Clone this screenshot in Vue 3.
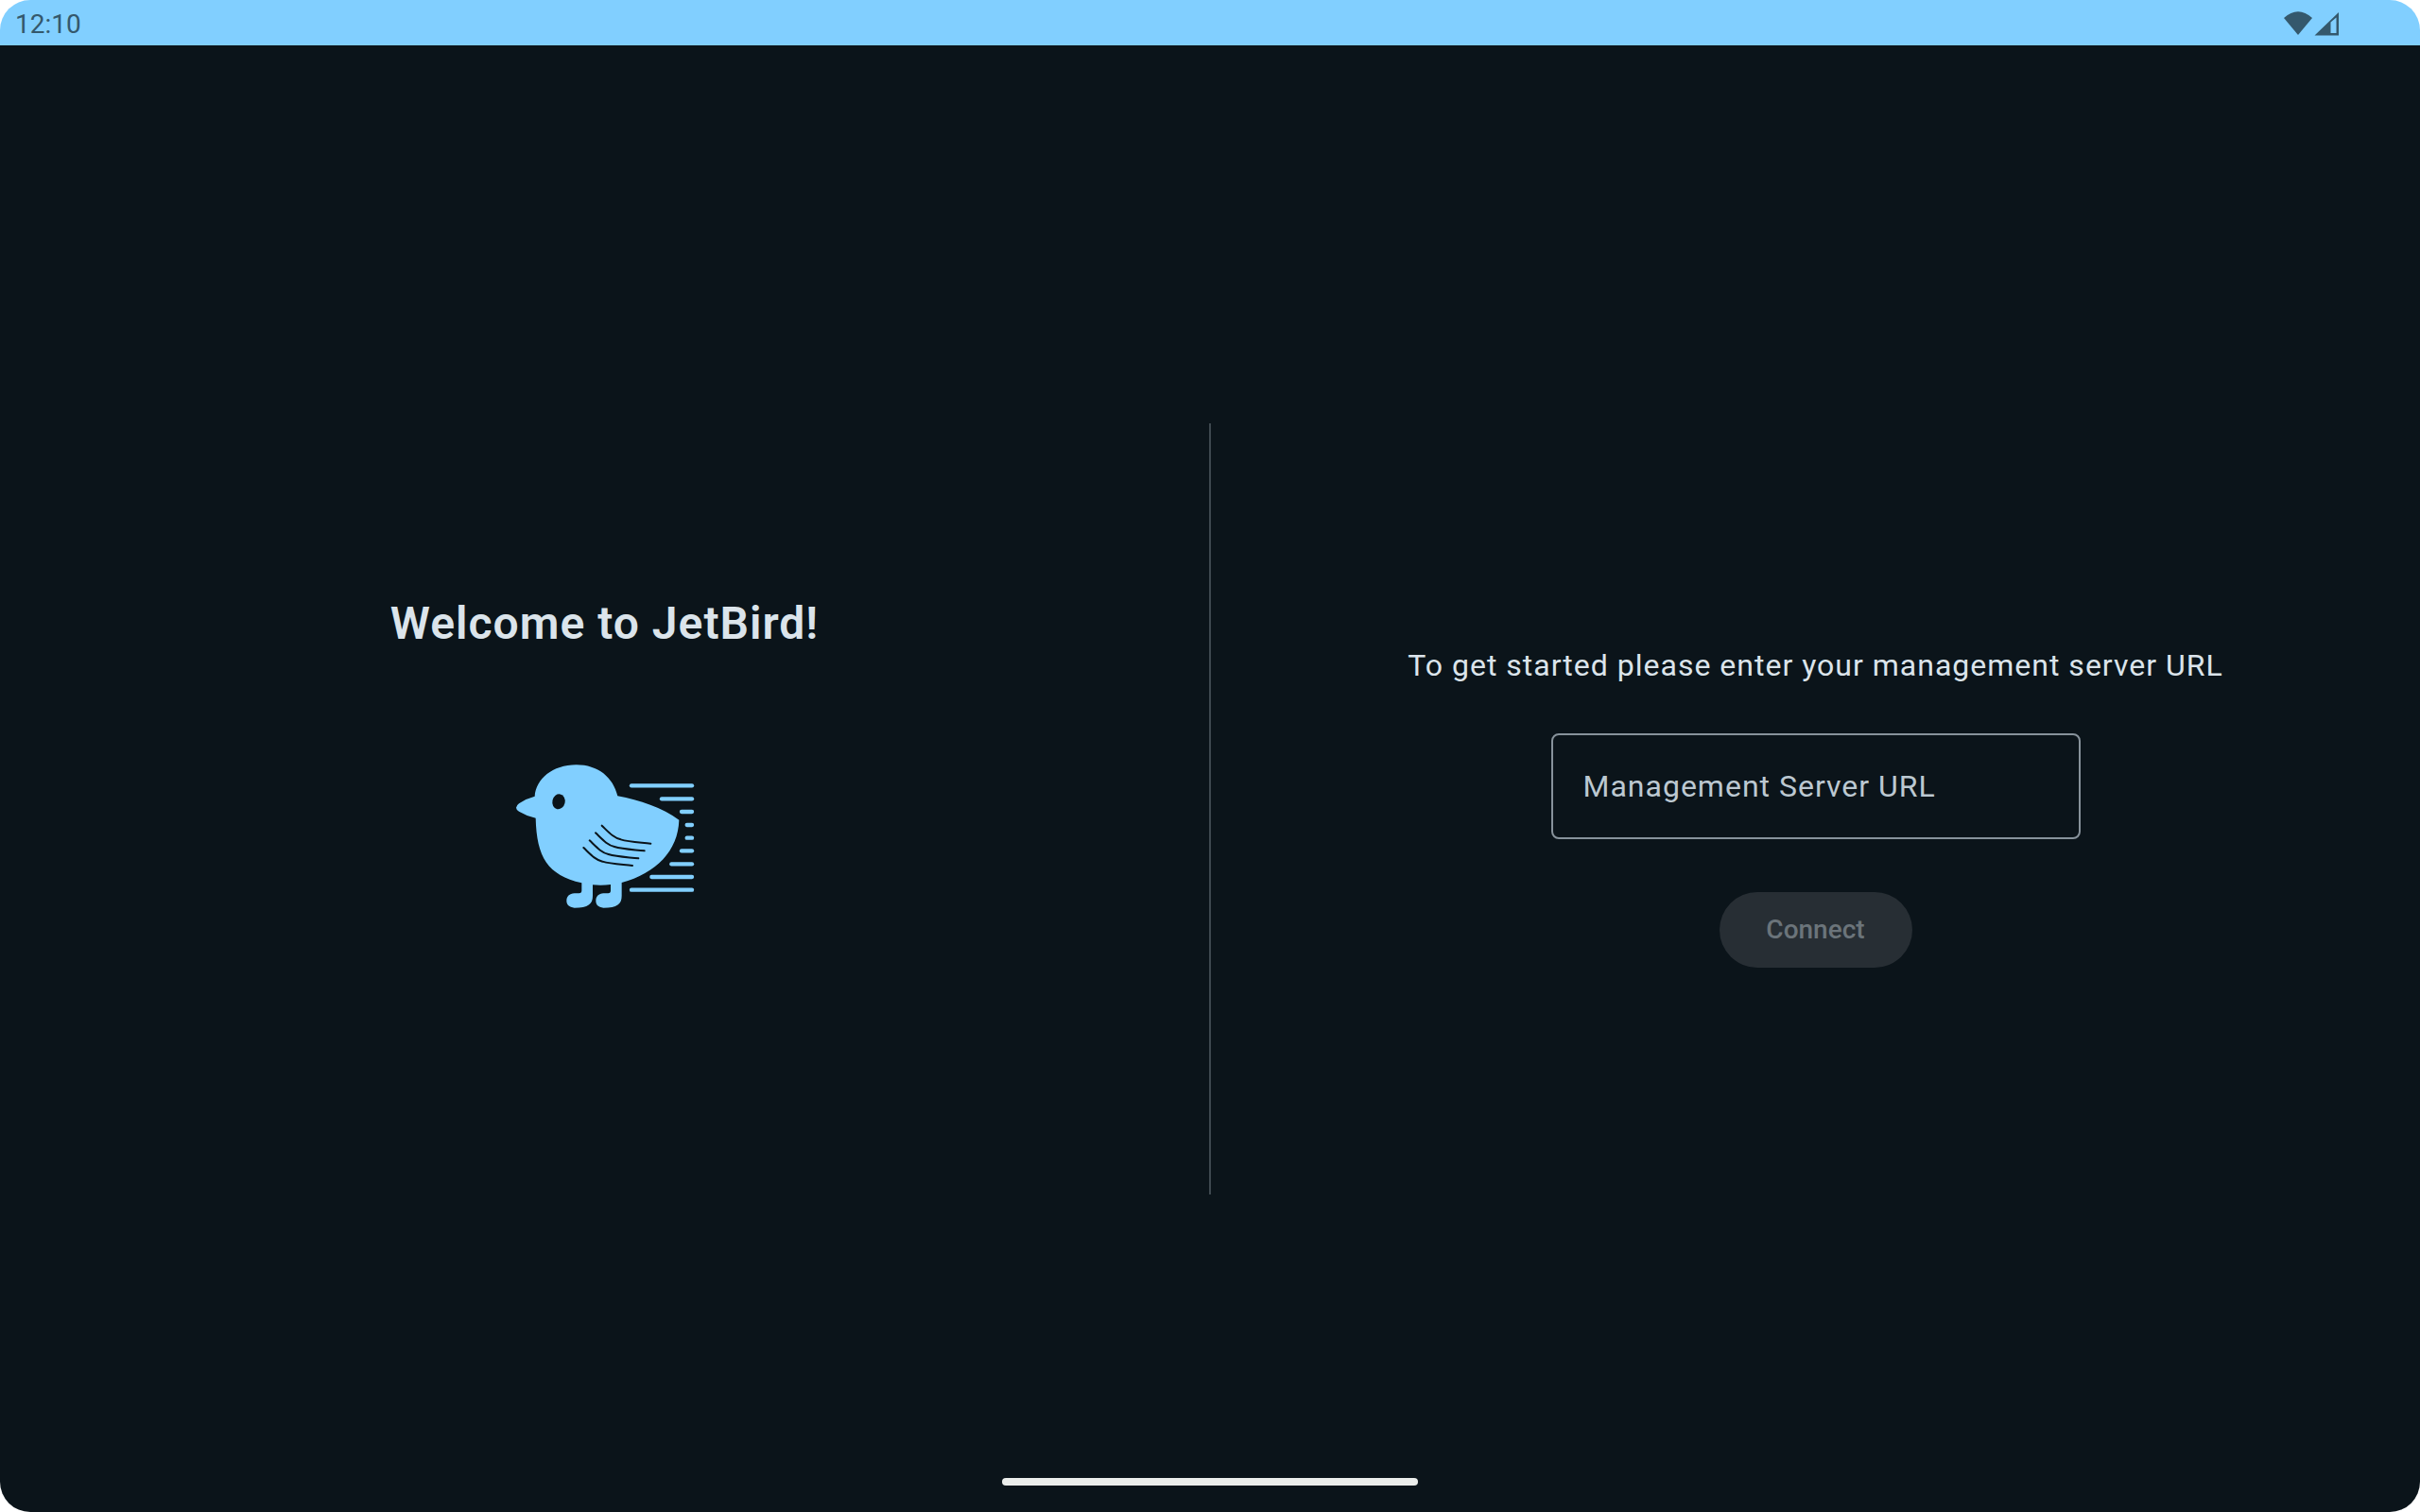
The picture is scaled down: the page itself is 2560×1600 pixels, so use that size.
<template>
  <div class="device">
    <header class="status-bar">
      <time class="clock">12:10</time>
      <svg class="status-icons" viewBox="0 0 60 28" aria-hidden="true">
        <path d="M0 8 Q15 -5.5 30 8 L15 26 Z" />
        <path fill-rule="evenodd" d="M32.500 26.500 L58 2 V26.500 Z M49.500 12.500 L55.500 7.500 V24 H49.500 Z" />
      </svg>
    </header>

    <main class="setup">
      <section class="welcome">
        <h1 class="title">Welcome to JetBird!</h1>
        <svg class="bird" viewBox="-258 -294 1176 1176" aria-hidden="true">
          <g class="bird-body">
            <path
              d="M107 158 C111 103 163 58 239 58 C308 58 356 98 370 157
                 C440 170 512 194 565 233 C562 331 492 402 383 432
                 V474 C383 500 369 512 325 512 C308 510 301 502 301 490
                 C301 476 310 467 325 466 H340 C346 466 348 462 348 457 V438
                 Q320 442 291 439 V474 C291 500 277 512 233 512
                 C216 510 208 502 208 490 C208 476 217 467 233 466 H247
                 C254 466 256 462 256 457 V433
                 C148 408 113 351 110 227 Q82 221 57 206 Q48 200 48 194
                 Q48 188 57 181 Q82 164 107 158 Z"
            />
          </g>
          <ellipse class="bird-eye" cx="183" cy="175" rx="20" ry="24" transform="rotate(12 183 175)" />
          <g class="bird-feathers">
            <path
              v-for="feather in feathers"
              :key="feather.x"
              :transform="`translate(${feather.x} ${feather.y})`"
              d="M0 0 C22 21 36 38 60 44 C86 52 120 53 155 57"
            />
          </g>
          <g class="bird-wind">
            <path v-for="line in windLines" :key="line.y" :d="`M${line.x} ${line.y} H606`" />
          </g>
        </svg>
      </section>

      <div class="divider"></div>

      <form class="connect" @submit.prevent>
        <p class="hint">To get started please enter your management server URL</p>
        <div class="field" :class="{ filled: serverUrl }">
          <input id="server-url" v-model="serverUrl" type="text" autocomplete="off" />
          <label for="server-url">Management Server URL</label>
        </div>
        <button class="connect-button" type="submit" :disabled="!serverUrl">Connect</button>
      </form>
    </main>

    <div class="home-handle"></div>
  </div>
</template>

<script setup>
import { ref } from 'vue'

const serverUrl = ref('')

const feathers = [
  { x: 320, y: 251 },
  { x: 300, y: 274 },
  { x: 281, y: 298 },
  { x: 262, y: 321 }
]

const windLines = [
  { x: 414, y: 124 },
  { x: 510, y: 166 },
  { x: 573, y: 207 },
  { x: 590, y: 249 },
  { x: 590, y: 290 },
  { x: 573, y: 331 },
  { x: 541, y: 373 },
  { x: 478, y: 414 },
  { x: 414, y: 455 }
]
</script>

<style>
body {
  margin: 0;
  background: #ffffff;
}
</style>

<style scoped>
.device {
  display: flex;
  flex-direction: column;
  min-height: 100vh;
  border-radius: 32px;
  overflow: hidden;
  background: linear-gradient(#81cfff 48px, #0b141a 48px);
  color: #dbe4eb;
  font-family: Roboto, "Liberation Sans", sans-serif;
}

.status-bar {
  display: flex;
  align-items: center;
  justify-content: space-between;
  box-sizing: border-box;
  height: 48px;
  padding: 2px 84px 0 16px;
}

.clock {
  padding-top: 2px;
  color: #34586c;
  font-size: 28px;
  line-height: 40px;
}

.status-icons {
  width: 60px;
  height: 28px;
  fill: #34586c;
}

.setup {
  display: grid;
  flex: 1;
  grid-template-columns: 1fr 2px 1fr;
  align-items: center;
  padding-top: 64px;
}

.welcome,
.connect {
  display: flex;
  flex-direction: column;
  align-items: center;
}

.title {
  margin: 0;
  font-size: 48px;
  font-weight: 600;
  letter-spacing: 1px;
  line-height: 64px;
}

.bird {
  width: 392px;
  height: 392px;
}

.bird-body {
  fill: #81cfff;
}

.bird-eye {
  fill: #0b141a;
}

.bird-feathers {
  fill: none;
  stroke: #0b141a;
  stroke-width: 6;
  stroke-linecap: round;
}

.bird-wind {
  fill: none;
  stroke: #81cfff;
  stroke-width: 13;
  stroke-linecap: round;
}

.divider {
  height: 816px;
  background: #3e484f;
}

.connect {
  gap: 48px;
}

.hint {
  margin: 0;
  font-size: 32px;
  letter-spacing: 1px;
  line-height: 48px;
}

.field {
  position: relative;
  width: 560px;
  height: 112px;
}

.field input {
  box-sizing: border-box;
  width: 100%;
  height: 100%;
  padding: 0 32px;
  border: 2px solid #87929b;
  border-radius: 8px;
  outline: none;
  background: transparent;
  color: inherit;
  font: inherit;
  font-size: 32px;
  letter-spacing: 1px;
}

.field label {
  position: absolute;
  top: 32px;
  left: 32px;
  padding: 0 2px;
  color: #bcc8d1;
  font-size: 32px;
  letter-spacing: 1px;
  line-height: 48px;
  pointer-events: none;
}

.field input:focus {
  border-color: #81cfff;
}

.field input:focus + label,
.field.filled label {
  top: -16px;
  background: #0b141a;
  font-size: 24px;
  line-height: 32px;
}

.connect-button {
  min-width: 204px;
  height: 80px;
  margin: 8px 0;
  padding: 0 48px 2px;
  border: none;
  border-radius: 40px;
  background: #81cfff;
  color: #00344b;
  font: inherit;
  font-size: 28px;
  font-weight: 500;
}

.connect-button:disabled {
  background: #272e34;
  color: #6b747a;
}

.home-handle {
  align-self: center;
  width: 440px;
  height: 8px;
  margin: -36px 0 28px;
  border-radius: 4px;
  background: #ebedeb;
}
</style>
